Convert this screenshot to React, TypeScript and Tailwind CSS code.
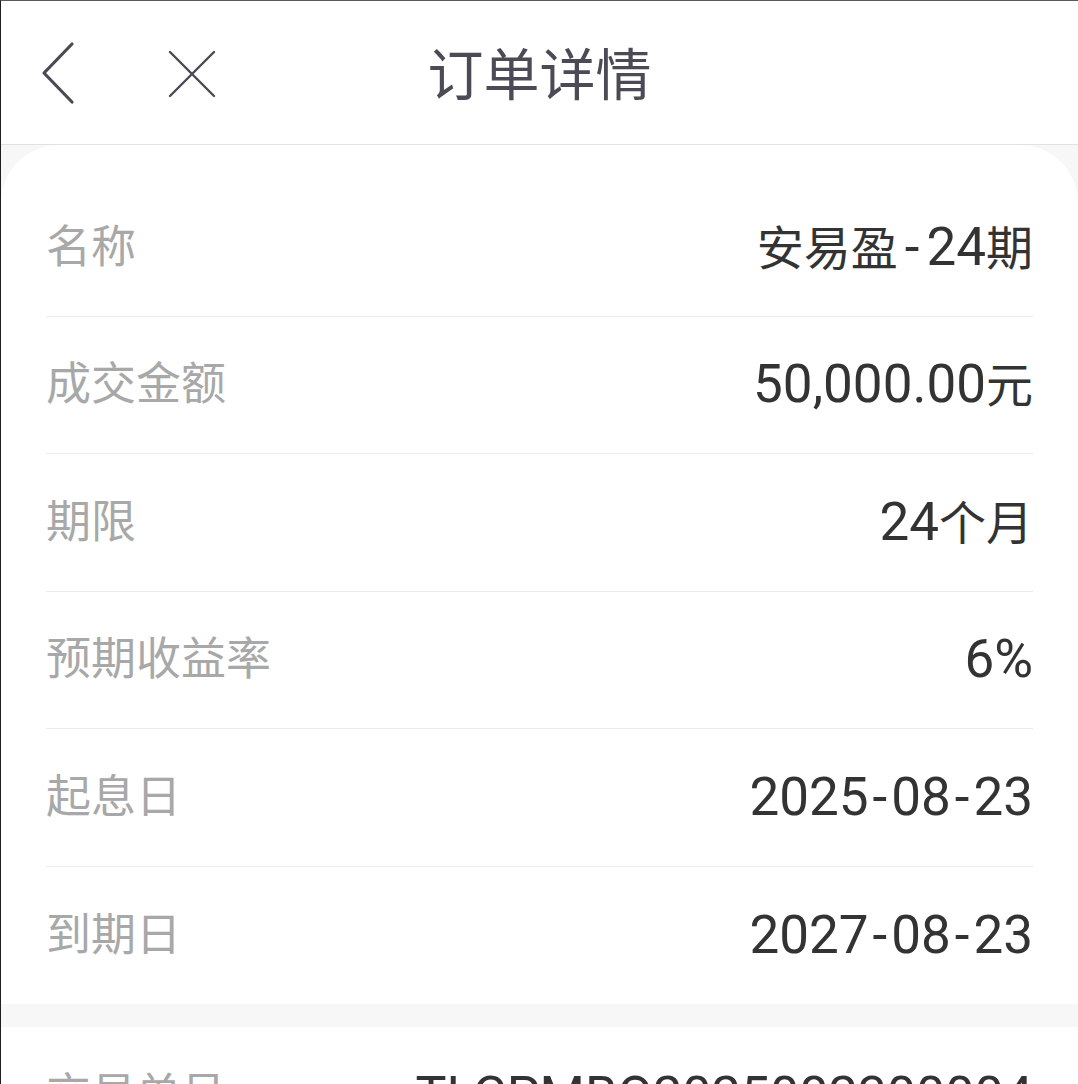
import React from 'react';

type DetailRow = {
  label: string;
  value: React.ReactNode;
};

const cjk = 'text-[47px]';

const Dash = () => <span className="mx-[4px]">-</span>;

const detailRows: DetailRow[] = [
  {
    label: '名称',
    value: (
      <>
        <span className={cjk}>安易盈</span>
        <span className="mx-[7px]">-</span>24<span className={cjk}>期</span>
      </>
    ),
  },
  {
    label: '成交金额',
    value: (
      <>
        50,000.00<span className={cjk}>元</span>
      </>
    ),
  },
  {
    label: '期限',
    value: (
      <>
        24<span className={cjk}>个月</span>
      </>
    ),
  },
  { label: '预期收益率', value: '6%' },
  {
    label: '起息日',
    value: (
      <>
        2025<Dash />08<Dash />23
      </>
    ),
  },
  {
    label: '到期日',
    value: (
      <>
        2027<Dash />08<Dash />23
      </>
    ),
  },
];

const BackIcon = () => (
  <svg width="40" height="64" viewBox="0 0 40 64" fill="none">
    <path
      d="M32 3 L4 32 L32 61"
      stroke="#4a4a55"
      strokeWidth="3.2"
      strokeLinecap="round"
      strokeLinejoin="round"
    />
  </svg>
);

const CloseIcon = () => (
  <svg width="50" height="50" viewBox="0 0 50 50" fill="none">
    <path
      d="M3 3 L47 47 M47 3 L3 47"
      stroke="#4a4a55"
      strokeWidth="2.4"
      strokeLinecap="round"
    />
  </svg>
);

const Row = ({
  label,
  value,
  last,
  valueClass = 'text-[53px]',
}: DetailRow & { last?: boolean; valueClass?: string }) => (
  <div
    className={`flex h-[137.5px] items-center justify-between ${
      last ? '' : 'border-b border-[#ebebeb]'
    }`}
  >
    <span className="text-[45px] text-[#a8a8a8]">{label}</span>
    <span className={`${valueClass} text-[#333333]`}>{value}</span>
  </div>
);

export default function App() {
  return (
    <div
      className="flex min-h-screen flex-col border-l border-t border-l-[#1e1e1e] border-t-[#5a5a5a] bg-[#f7f7f7]"
      style={{ fontFamily: 'Roboto, "Noto Sans CJK SC", sans-serif' }}
    >
      {/* Header */}
      <div className="relative flex h-[144px] items-center justify-center border-b border-[#e2e2e2] bg-white">
        <div className="absolute left-[39px] top-[40px]">
          <BackIcon />
        </div>
        <div className="absolute left-[166px] top-[48px]">
          <CloseIcon />
        </div>
        <h1 className="mt-[6px] text-[56px] font-normal text-[#4b4a55]">
          订单详情
        </h1>
      </div>

      {/* Detail card */}
      <div className="rounded-t-[58px] bg-white px-[45px] pt-[34px]">
        {detailRows.map((row, i) => (
          <Row key={row.label} {...row} last={i === detailRows.length - 1} />
        ))}
      </div>

      {/* Order number card */}
      <div className="mt-[23px] flex-1 bg-white px-[45px]">
        <Row
          label="交易单号"
          value="TLCPMBO2025082300004"
          valueClass="text-[52px]"
          last
        />
      </div>
    </div>
  );
}
